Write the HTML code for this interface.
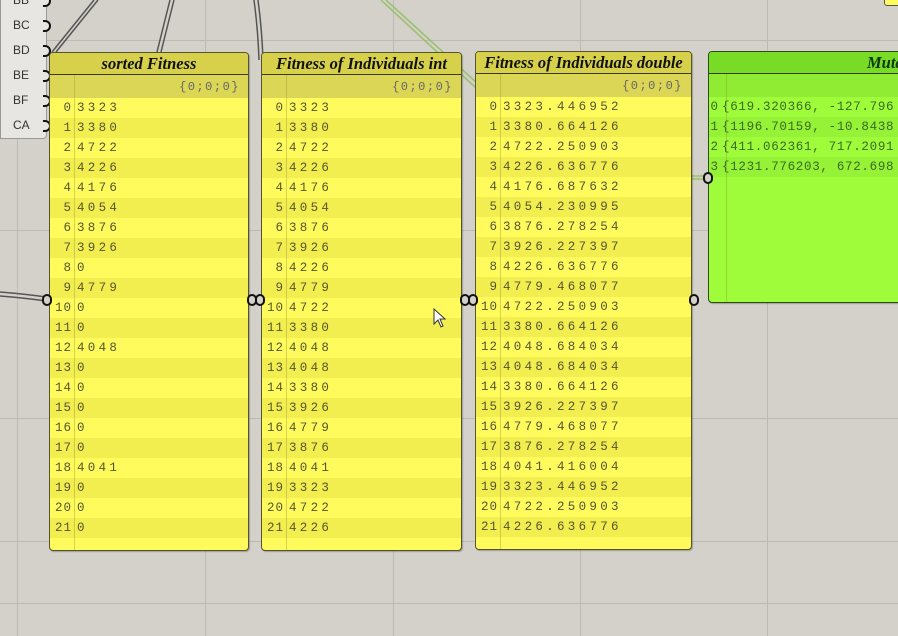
<!DOCTYPE html>
<html><head><meta charset="utf-8"><style>
body{margin:0;width:898px;height:636px;overflow:hidden;background:#d4d1cb;position:relative;font-family:"Liberation Mono",monospace}
.gv{position:absolute;top:0;bottom:0;width:1px;background:#bdbab3}
.gh{position:absolute;left:0;right:0;height:1px;background:#bdbab3}
.p{position:absolute;border:1px solid #55542a;border-radius:4px;background:#fffb5c;overflow:hidden;box-shadow:1px 1px 1px rgba(0,0,0,.25)}
.t{height:21px;background:#d6d04a;border-bottom:1px solid #3a3a1a;font:bold italic 16.5px "Liberation Serif",serif;text-align:center;line-height:21px;color:#111;white-space:nowrap}
.h{height:23px;background:#dcd656;position:relative;font-size:12px;color:#666;text-align:right;padding-right:8px;line-height:24px;letter-spacing:1.5px}
.r{height:20px;line-height:20px;font-size:12.5px;color:#555530;letter-spacing:3.3px;white-space:nowrap}
.r:nth-child(odd){background:#f2ee50}
.r b{display:inline-block;width:22px;text-align:right;font-weight:normal;margin-right:5px;letter-spacing:1px}
.col{position:absolute;top:22px;bottom:0;width:1px;background:rgba(140,140,40,.35)}
.g{background:#9efc3a;border-color:#2f4a1a}
.g .t{background:#78dc26;color:#0d3a0d;text-align:right;padding-right:0}
.g .h{background:#8fec32}
.g .r{color:#3a6a20;background:transparent;letter-spacing:0.7px}
.g .r b{margin-right:3px}
.g .r:nth-child(odd){background:#95f236}
.side{position:absolute;left:0;top:-13px;width:45px;height:150px;background:#e8e6e2;border:1px solid #999;border-radius:0 0 4px 0;font:12px "Liberation Sans",sans-serif;color:#333}
.side div{height:25px;line-height:25px;padding-left:12px;position:relative}
.side div:after{content:"";position:absolute;right:-5px;top:7px;width:6px;height:8px;border:2px solid #111;border-left:none;border-radius:0 6px 6px 0;background:#e8e6e2}
.plug{position:absolute;width:6px;height:8px;border:2px solid #111;border-radius:6px;background:#d4d1cb}
</style></head><body>
<div class="gv" style="left:17px"></div><div class="gv" style="left:205px"></div><div class="gv" style="left:393px"></div><div class="gv" style="left:580px"></div><div class="gv" style="left:767px"></div>
<div class="gh" style="top:40px"></div><div class="gh" style="top:230px"></div><div class="gh" style="top:418px"></div><div class="gh" style="top:541px"></div><div class="gh" style="top:603px"></div>
<svg width="898" height="636" style="position:absolute;left:0;top:0">
<g stroke="#555" stroke-width="1.5" fill="none">
<path d="M94 0 L52 52"/><path d="M98 0 L56 52"/>
<path d="M170 0 L157 52"/><path d="M174 0 L161 52"/>
<path d="M254 0 Q258 30 259 60"/><path d="M258 0 Q262 30 263 60"/>
<path d="M0 292 Q25 294 46 297"/><path d="M0 296 Q25 298 46 301"/>
</g>
<g stroke="#9cc070" stroke-width="1.6" fill="none">
<path d="M381 0 L476 88"/><path d="M386 0 L478 84"/>
<path d="M692 176 L706 176"/><path d="M692 179 L706 179"/>
</g>
</svg>
<div class="side"><div>BB</div><div>BC</div><div>BD</div><div>BE</div><div>BF</div><div>CA</div></div>
<div style="position:absolute;left:884px;top:-4px;width:20px;height:8px;background:#fffb5c;border:1px solid #555;border-radius:3px"></div>

<div class="p" style="left:49px;top:52px;width:198px;height:497px"><div class="t">sorted Fitness</div><div class="h">{0;0;0}</div><div class="col" style="left:24px"></div>
<div class="r"><b>0</b>3323</div><div class="r"><b>1</b>3380</div><div class="r"><b>2</b>4722</div><div class="r"><b>3</b>4226</div><div class="r"><b>4</b>4176</div><div class="r"><b>5</b>4054</div><div class="r"><b>6</b>3876</div><div class="r"><b>7</b>3926</div><div class="r"><b>8</b>0</div><div class="r"><b>9</b>4779</div><div class="r"><b>10</b>0</div><div class="r"><b>11</b>0</div><div class="r"><b>12</b>4048</div><div class="r"><b>13</b>0</div><div class="r"><b>14</b>0</div><div class="r"><b>15</b>0</div><div class="r"><b>16</b>0</div><div class="r"><b>17</b>0</div><div class="r"><b>18</b>4041</div><div class="r"><b>19</b>0</div><div class="r"><b>20</b>0</div><div class="r"><b>21</b>0</div></div>

<div class="p" style="left:261px;top:52px;width:199px;height:497px"><div class="t">Fitness of Individuals int</div><div class="h">{0;0;0}</div><div class="col" style="left:24px"></div>
<div class="r"><b>0</b>3323</div><div class="r"><b>1</b>3380</div><div class="r"><b>2</b>4722</div><div class="r"><b>3</b>4226</div><div class="r"><b>4</b>4176</div><div class="r"><b>5</b>4054</div><div class="r"><b>6</b>3876</div><div class="r"><b>7</b>3926</div><div class="r"><b>8</b>4226</div><div class="r"><b>9</b>4779</div><div class="r"><b>10</b>4722</div><div class="r"><b>11</b>3380</div><div class="r"><b>12</b>4048</div><div class="r"><b>13</b>4048</div><div class="r"><b>14</b>3380</div><div class="r"><b>15</b>3926</div><div class="r"><b>16</b>4779</div><div class="r"><b>17</b>3876</div><div class="r"><b>18</b>4041</div><div class="r"><b>19</b>3323</div><div class="r"><b>20</b>4722</div><div class="r"><b>21</b>4226</div></div>

<div class="p" style="left:475px;top:51px;width:215px;height:497px"><div class="t">Fitness of Individuals double</div><div class="h">{0;0;0}</div><div class="col" style="left:24px"></div>
<div class="r"><b>0</b>3323.446952</div><div class="r"><b>1</b>3380.664126</div><div class="r"><b>2</b>4722.250903</div><div class="r"><b>3</b>4226.636776</div><div class="r"><b>4</b>4176.687632</div><div class="r"><b>5</b>4054.230995</div><div class="r"><b>6</b>3876.278254</div><div class="r"><b>7</b>3926.227397</div><div class="r"><b>8</b>4226.636776</div><div class="r"><b>9</b>4779.468077</div><div class="r"><b>10</b>4722.250903</div><div class="r"><b>11</b>3380.664126</div><div class="r"><b>12</b>4048.684034</div><div class="r"><b>13</b>4048.684034</div><div class="r"><b>14</b>3380.664126</div><div class="r"><b>15</b>3926.227397</div><div class="r"><b>16</b>4779.468077</div><div class="r"><b>17</b>3876.278254</div><div class="r"><b>18</b>4041.416004</div><div class="r"><b>19</b>3323.446952</div><div class="r"><b>20</b>4722.250903</div><div class="r"><b>21</b>4226.636776</div></div>

<div class="p g" style="left:708px;top:51px;width:200px;height:250px"><div class="t" style="text-align:left;padding-left:158px">Mutated</div><div class="h"></div><div class="col" style="left:17px"></div>
<div class="r"><b style="width:10px">0</b>{619.320366, -127.796</div><div class="r"><b style="width:10px">1</b>{1196.70159, -10.8438</div><div class="r"><b style="width:10px">2</b>{411.062361, 717.2091</div><div class="r"><b style="width:10px">3</b>{1231.776203, 672.698</div></div>

<div class="plug" style="left:42px;top:294px"></div>
<div class="plug" style="left:247px;top:294px"></div>
<div class="plug" style="left:255px;top:294px"></div>
<div class="plug" style="left:460px;top:294px"></div>
<div class="plug" style="left:468px;top:294px"></div>
<div class="plug" style="left:689px;top:294px"></div>
<div class="plug" style="left:703px;top:172px"></div>
<svg width="14" height="22" style="position:absolute;left:433px;top:308px"><path d="M1 1 L1 16 L5 12 L8 19 L10 18 L7 11 L12 11 Z" fill="#fff" stroke="#333" stroke-width="1"/></svg>
</body></html>
